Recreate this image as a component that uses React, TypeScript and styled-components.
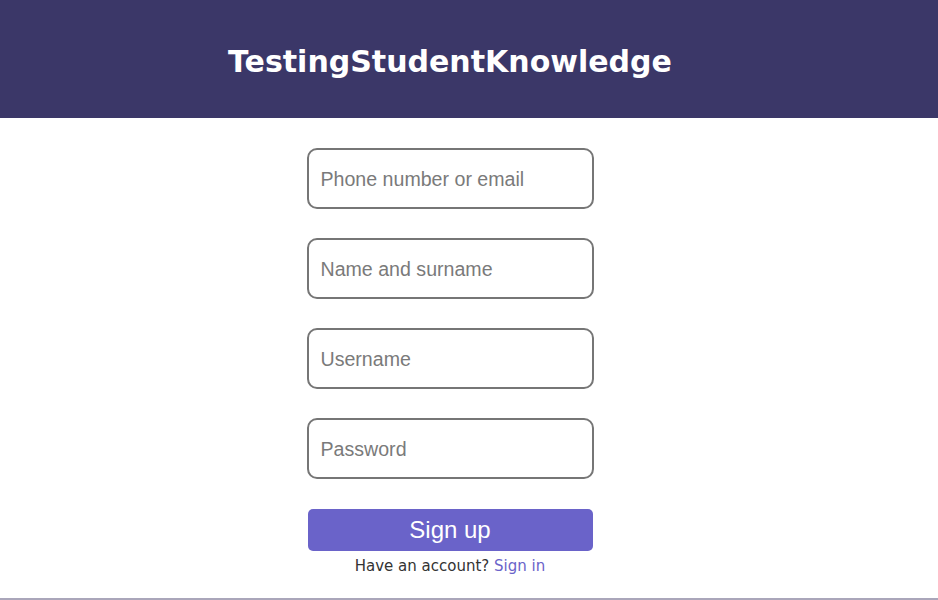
import React from "react";
import styled, { createGlobalStyle } from "styled-components";

const GlobalStyle = createGlobalStyle`
  html, body { margin: 0; padding: 0; background: #ffffff; }
  body { font-family: "DejaVu Sans", Verdana, sans-serif; }
  * { box-sizing: border-box; }
`;

const Header = styled.header`
  height: 118px;
  background: #3b3768;
  display: flex;
  align-items: center;
`;

const HeaderInner = styled.div`
  width: 900px;
  text-align: center;
`;

const Title = styled.h1`
  margin: 0;
  color: #ffffff;
  font-family: "DejaVu Sans", Verdana, sans-serif;
  font-weight: bold;
  font-size: 30px;
  line-height: 1;
  padding-top: 6px;
`;

const Main = styled.main`
  width: 900px;
  display: flex;
  flex-direction: column;
  align-items: center;
  padding-top: 30px;
  height: 480px;
`;

const Form = styled.form`
  display: flex;
  flex-direction: column;
  align-items: center;
  gap: 29px;
  width: 287px;
`;

const Input = styled.input`
  width: 287px;
  height: 61px;
  border: 2px solid #767676;
  border-radius: 10px;
  padding: 2px 12px 0;
  font-family: "Liberation Sans", Arial, sans-serif;
  font-size: 19.6px;
  color: #222;
  outline: none;
  &::placeholder { color: #7a7a7a; }
`;

const Button = styled.button`
  margin-top: 30px;
  width: 285px;
  height: 42px;
  border: none;
  border-radius: 5px;
  background: #6a63c9;
  color: #ffffff;
  font-family: "Liberation Sans", Arial, sans-serif;
  font-size: 24px;
  cursor: pointer;
`;

const Note = styled.p`
  margin: 6px 0 0;
  font-family: "DejaVu Sans", Verdana, sans-serif;
  font-size: 15px;
  color: #333333;
`;

const Link = styled.a`
  color: #6a63c9;
  text-decoration: none;
`;

const Footer = styled.footer`
  border-top: 2px solid #aaa6ba;
  height: 2px;
`;

export default function App() {
  return (
    <>
      <GlobalStyle />
      <Header>
        <HeaderInner>
          <Title>TestingStudentKnowledge</Title>
        </HeaderInner>
      </Header>
      <Main>
        <Form onSubmit={(e) => e.preventDefault()}>
          <Input type="text" placeholder="Phone number or email" />
          <Input type="text" placeholder="Name and surname" />
          <Input type="text" placeholder="Username" />
          <Input type="password" placeholder="Password" />
        </Form>
        <Button type="button">Sign up</Button>
        <Note>
          Have an account? <Link href="#">Sign in</Link>
        </Note>
      </Main>
      <Footer />
    </>
  );
}
